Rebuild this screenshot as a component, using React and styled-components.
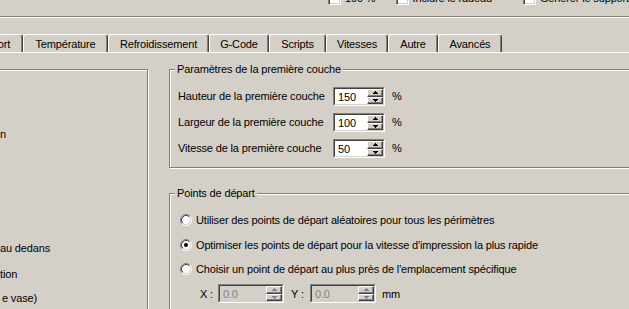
import React from "react";
import styled, { createGlobalStyle } from "styled-components";

const Global = createGlobalStyle`
  body {
    margin: 0;
    background: #d4d0c8;
    font-family: "Liberation Sans", Arial, sans-serif;
    font-size: 11px;
    letter-spacing: -0.15px;
    color: #000;
  }
`;

const Window = styled.div`
  width: 629px;
  height: 309px;
  overflow: hidden;
  background: #d4d0c8;
`;

const OptionStrip = styled.div`
  display: flex;
  height: 16px;
  padding-left: 328px;
  border-bottom: 1px solid #808080;
  box-shadow: 0 1px 0 #fff;
`;

const Option = styled.label`
  display: flex;
  align-items: center;
  gap: 4px;
  width: ${(p) => (p.$w ? `${p.$w}px` : "auto")};
  height: 13px;
  margin-top: -8px;
  line-height: 13px;
  white-space: nowrap;
`;

const Check = styled.span`
  flex: none;
  width: 13px;
  height: 13px;
  box-sizing: border-box;
  background: #fff;
  border: 1px solid;
  border-color: #808080 #fff #fff #808080;
  box-shadow: inset 1px 1px 0 #404040, inset -1px -1px 0 #d4d0c8;
`;

const TabBar = styled.div`
  display: flex;
  height: 18px;
  margin: 17px 0 0 -40px;
`;

const Tab = styled.div`
  flex: none;
  width: ${(p) => p.$w}px;
  height: 18px;
  box-sizing: border-box;
  display: flex;
  align-items: center;
  justify-content: center;
  padding-top: 1px;
  border: 1px solid;
  border-bottom: none;
  border-color: #fff #404040 #fff #fff;
  border-radius: 3px 3px 0 0;
  box-shadow: inset -1px 0 0 #808080;
  white-space: nowrap;
`;

const Page = styled.div`
  display: flex;
  align-items: flex-start;
  border-top: 1px solid #fff;
`;

const SideBox = styled.div`
  flex: none;
  width: 158px;
  height: 300px;
  box-sizing: border-box;
  margin: 16px 0 0 -10px;
  padding-left: 9px;
  border: 1px solid #808080;
  box-shadow: inset 1px 1px 0 #fff, 1px 1px 0 #fff;
`;

const SideItem = styled.div`
  height: 16px;
  line-height: 16px;
  margin-top: ${(p) => p.$top}px;
  padding-left: ${(p) => p.$indent || 0}px;
  white-space: nowrap;
`;

const Column = styled.div`
  flex: none;
  width: 520px;
  display: flex;
  flex-direction: column;
  gap: 19px;
  margin: 10px 0 0 21px;
`;

const Group = styled.fieldset`
  margin: 0;
  min-width: 0;
  padding: ${(p) => p.$pad};
  border: 1px solid #808080;
  box-shadow: inset 1px 1px 0 #fff, 1px 1px 0 #fff;
`;

const Legend = styled.legend`
  margin-left: -3px;
  padding: 0 2px;
  height: 13px;
  line-height: 13px;
  background: #d4d0c8;
`;

const FieldGrid = styled.div`
  display: grid;
  grid-template-columns: 155px 52px 1fr;
  grid-auto-rows: 19px;
  row-gap: 7px;
  align-items: center;
  line-height: 19px;
`;

const Unit = styled.span`
  padding-left: ${(p) => p.$gap}px;
  white-space: nowrap;
`;

const Spin = styled.div`
  display: flex;
  width: ${(p) => p.$w}px;
  height: 19px;
  box-sizing: border-box;
  border: 1px solid;
  border-color: #808080 #fff #fff #808080;
  background: ${(p) => (p.$disabled ? "#d4d0c8" : "#fff")};
  color: ${(p) => (p.$disabled ? "#808080" : "#000")};
`;

const SpinValue = styled.div`
  flex: 1;
  padding: 1px 0 0 3px;
  line-height: 14px;
  border-top: 1px solid #404040;
  border-left: 1px solid #404040;
  border-bottom: 1px solid #d4d0c8;
`;

const SpinButtons = styled.div`
  display: flex;
  flex-direction: column;
  width: 16px;
  border-top: 1px solid #404040;
  border-bottom: 1px solid #d4d0c8;
  border-right: 1px solid #d4d0c8;
`;

const SpinButton = styled.div`
  flex: 1;
  display: flex;
  align-items: center;
  justify-content: center;
  box-sizing: border-box;
  background: #d4d0c8;
  border: 1px solid;
  border-color: #fff #404040 #404040 #fff;
  box-shadow: inset -1px -1px 0 #808080;
  svg {
    display: block;
  }
`;

const RadioList = styled.div`
  display: flex;
  flex-direction: column;
  gap: 4.5px;
`;

const Row = styled.div`
  display: flex;
  align-items: center;
  height: 20px;
  padding-left: ${(p) => p.$indent}px;
  white-space: nowrap;
`;

const RadioMark = styled.svg`
  flex: none;
  width: 12px;
  height: 12px;
  margin-right: 4px;
`;

const CoordLabel = styled.span`
  width: ${(p) => p.$w}px;
  flex: none;
`;

function Arrow({ up, color }) {
  return (
    <svg width="5" height="3" viewBox="0 0 5 3" shapeRendering="crispEdges">
      <path d={up ? "M0 3h5L2.5 0z" : "M0 0h5L2.5 3z"} fill={color} />
    </svg>
  );
}

function SpinBox({ value, w, disabled }) {
  const c = disabled ? "#808080" : "#000";
  return (
    <Spin $w={w} $disabled={disabled}>
      <SpinValue>{value}</SpinValue>
      <SpinButtons>
        <SpinButton>
          <Arrow up color={c} />
        </SpinButton>
        <SpinButton>
          <Arrow color={c} />
        </SpinButton>
      </SpinButtons>
    </Spin>
  );
}

function Radio({ checked }) {
  return (
    <RadioMark viewBox="0 0 12 12">
      <circle cx="6" cy="6" r="5" fill="#fff" />
      <path d="M2.11 9.89A5.5 5.5 0 0 1 9.89 2.11" fill="none" stroke="#808080" />
      <path d="M9.89 2.11A5.5 5.5 0 0 1 2.11 9.89" fill="none" stroke="#fff" />
      <path d="M2.82 9.18A4.5 4.5 0 0 1 9.18 2.82" fill="none" stroke="#404040" />
      <path d="M9.18 2.82A4.5 4.5 0 0 1 2.82 9.18" fill="none" stroke="#d4d0c8" />
      {checked && <circle cx="6" cy="6" r="2" fill="#000" />}
    </RadioMark>
  );
}

const tabs = [
  { label: "Support", w: 63 },
  { label: "Température", w: 85 },
  { label: "Refroidissement", w: 101 },
  { label: "G-Code", w: 60 },
  { label: "Scripts", w: 57 },
  { label: "Vitesses", w: 62 },
  { label: "Autre", w: 50 },
  { label: "Avancés", w: 64 },
];

const firstLayer = [
  { label: "Hauteur de la première couche", value: "150" },
  { label: "Largeur de la première couche", value: "100" },
  { label: "Vitesse de la première couche", value: "50" },
];

const startPoints = [
  { label: "Utiliser des points de départ aléatoires pour tous les périmètres" },
  { label: "Optimiser les points de départ pour la vitesse d'impression la plus rapide", checked: true },
  { label: "Choisir un point de départ au plus près de l'emplacement spécifique" },
];

export default function App() {
  return (
    <Window>
      <Global />
      <OptionStrip>
        <Option $w={70}>
          <Check />
          100 %
        </Option>
        <Option $w={132}>
          <Check />
          Inclure le radeau
        </Option>
        <Option>
          <Check />
          Générer le support
        </Option>
      </OptionStrip>

      <TabBar>
        {tabs.map((t) => (
          <Tab key={t.label} $w={t.w}>
            {t.label}
          </Tab>
        ))}
      </TabBar>

      <Page>
        <SideBox>
          <SideItem $top={56}>n</SideItem>
          <SideItem $top={98}>au dedans</SideItem>
          <SideItem $top={10}>tion</SideItem>
          <SideItem $top={8} $indent={2}>e vase)</SideItem>
        </SideBox>

        <Column>
          <Group $pad="11px 8px 9px">
            <Legend>Paramètres de la première couche</Legend>
            <FieldGrid>
              {firstLayer.map((f) => (
                <React.Fragment key={f.label}>
                  <span>{f.label}</span>
                  <SpinBox value={f.value} w={52} />
                  <Unit $gap={7}>%</Unit>
                </React.Fragment>
              ))}
            </FieldGrid>
          </Group>

          <Group $pad="10px 8px 12px">
            <Legend>Points de départ</Legend>
            <RadioList>
              {startPoints.map((r) => (
                <Row key={r.label} $indent={2}>
                  <Radio checked={r.checked} />
                  {r.label}
                </Row>
              ))}
              <Row $indent={22}>
                <CoordLabel $w={18}>X :</CoordLabel>
                <SpinBox value="0.0" w={66} disabled />
                <Unit $gap={7} />
                <CoordLabel $w={19}>Y :</CoordLabel>
                <SpinBox value="0.0" w={66} disabled />
                <Unit $gap={6}>mm</Unit>
              </Row>
            </RadioList>
          </Group>
        </Column>
      </Page>
    </Window>
  );
}
